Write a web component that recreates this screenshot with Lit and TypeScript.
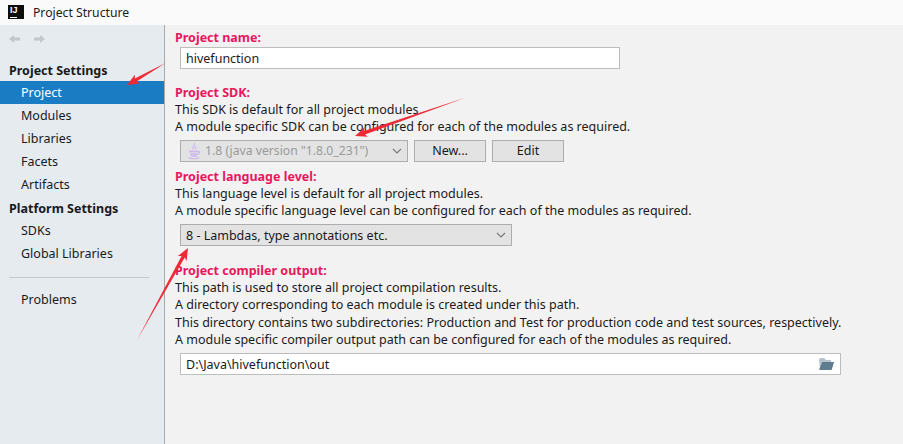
import { LitElement, html, css, svg } from "lit";
import { customElement } from "lit/decorators.js";

const arrows = [
  { from: [165.5, 63], to: [127, 85] },
  { from: [466, 97.5], to: [355, 136] },
  { from: [137, 340], to: [188, 248] },
];

function arrow(a: { from: number[]; to: number[] }) {
  const [x1, y1] = a.from;
  const [x2, y2] = a.to;
  const dx = x2 - x1;
  const dy = y2 - y1;
  const len = Math.hypot(dx, dy);
  const ux = dx / len;
  const uy = dy / len;
  const nx = -uy;
  const ny = ux;
  const p = (along: number, side: number) =>
    `${(x2 - ux * along + nx * side).toFixed(1)},${(y2 - uy * along + ny * side).toFixed(1)}`;
  return svg`<polygon fill="#ee2a37" points="${x1},${y1} ${p(10, 1.8)} ${p(12, 5)} ${x2},${y2} ${p(12, -5)} ${p(10, -1.8)}"></polygon>`;
}

@customElement("app-root")
export class AppRoot extends LitElement {
  static styles = css`
    :host {
      display: block;
      width: 903px;
      height: 444px;
      position: relative;
      overflow: hidden;
      font-family: "Noto Sans", "Open Sans", sans-serif;
      font-size: 12.5px;
      color: #1a1a1a;
      background: #f2f2f2;
    }
    .title {
      height: 25px;
      background: #fafafa;
      display: flex;
      align-items: center;
      padding-left: 8px;
      gap: 9px;
      font-size: 12.2px;
    }
    .logo {
      width: 16px;
      height: 14px;
      background: #0d0d0d;
      color: #fff;
      font: bold 9px/10px "Liberation Sans", sans-serif;
      padding-left: 2px;
      box-sizing: border-box;
      position: relative;
      margin-top: -1px;
    }
    .logo::after {
      content: "";
      position: absolute;
      left: 2px;
      bottom: 1px;
      width: 7px;
      height: 1px;
      background: #fff;
    }
    .body {
      display: flex;
      height: 419px;
    }
    .side {
      width: 164px;
      background: #e6ebf0;
      border-right: 1px solid #a8a8a8;
      box-sizing: content-box;
      flex: none;
    }
    .nav {
      height: 27px;
      display: flex;
      align-items: center;
      gap: 12px;
      padding: 0 0 0 9px;
    }
    .head {
      height: 23px;
      line-height: 25px;
      padding-left: 9px;
      font-weight: 700;
    }
    .item {
      height: 23px;
      line-height: 23px;
      padding-left: 21px;
    }
    .item.sel {
      background: #1a7dc4;
      color: #fff;
    }
    .spacer1 {
      height: 6px;
    }
    .sep {
      height: 1px;
      background: #c9c9c9;
      margin: 12px 15px 10px 9px;
    }
    .main {
      flex: 1;
      padding: 4px 0 0 10px;
    }
    .label {
      color: #e8175d;
      font-weight: 700;
      line-height: 17px;
    }
    .line {
      line-height: 17.3px;
      white-space: nowrap;
    }
    .input {
      height: 22px;
      box-sizing: border-box;
      border: 1px solid #bdbdbd;
      background: #fff;
      display: flex;
      align-items: center;
      padding-left: 5px;
      justify-content: space-between;
    }
    .name {
      width: 440px;
      margin: 1px 0 15px 5px;
    }
    .row {
      display: flex;
      gap: 6px;
      margin: 4px 0 6px 5px;
    }
    .combo {
      height: 22px;
      box-sizing: border-box;
      border: 1px solid #adadad;
      background: #e3e3e3;
      display: flex;
      align-items: center;
      justify-content: space-between;
      padding: 0 5px;
    }
    .combo svg {
      flex: none;
    }
    .sdk {
      width: 228px;
      color: #9a9a9a;
      font-size: 12.2px;
    }
    .sdk span {
      display: flex;
      align-items: center;
      gap: 3px;
    }
    .lang {
      width: 332px;
      margin: 5px 0 16px 5px;
    }
    .btn {
      height: 22px;
      box-sizing: border-box;
      border: 1px solid #adadad;
      background: #e3e3e3;
      display: flex;
      align-items: center;
      justify-content: center;
    }
    .b1 {
      width: 72px;
    }
    .b2 {
      width: 72px;
    }
    .out {
      width: 661px;
      margin: 5px 0 0 5px;
      padding-right: 6px;
    }
    .overlay {
      position: absolute;
      inset: 0;
      pointer-events: none;
    }
  `;

  private chev() {
    return html`<svg width="10" height="6" viewBox="0 0 10 6"><path d="M1 1l4 4 4-4" fill="none" stroke="#777" stroke-width="1.1"></path></svg>`;
  }

  render() {
    return html`
      <div class="title"><div class="logo">IJ</div><div>Project Structure</div></div>
      <div class="body">
        <div class="side">
          <div class="nav">
            <svg width="13" height="10" viewBox="0 0 13 10"><path d="M0 5l5-4v2.500h6v3h-6v2.500z" fill="#c3c7ca"></path></svg>
            <svg width="13" height="10" viewBox="0 0 13 10"><path d="M11 5l-5-4v2.500h-6v3h6v2.500z" fill="#c3c7ca"></path></svg>
          </div>
          <div class="spacer1"></div>
          <div class="head">Project Settings</div>
          <div class="item sel">Project</div>
          <div class="item">Modules</div>
          <div class="item">Libraries</div>
          <div class="item">Facets</div>
          <div class="item">Artifacts</div>
          <div class="head">Platform Settings</div>
          <div class="item">SDKs</div>
          <div class="item">Global Libraries</div>
          <div class="sep"></div>
          <div class="item">Problems</div>
        </div>
        <div class="main">
          <div class="label">Project name:</div>
          <div class="input name">hivefunction</div>
          <div class="label">Project SDK:</div>
          <div class="line">This SDK is default for all project modules</div>
          <div class="line">A module specific SDK can be configured for each of the modules as required.</div>
          <div class="row">
            <div class="combo sdk">
              <span>
                <svg width="16" height="18" viewBox="0 0 16 18"><path d="M8.500 1c1.500 2.500-3 3.500-1.500 6.500M10.500 4c-2 1.500-1.500 2.500-.5 3.500" fill="none" stroke="#d3bff0" stroke-width="1.300"></path><path d="M3 9.500h8.500M4 12h7M11.500 9.500c2.500-.5 2.500 2-.5 3M5 14h6M2.500 15.500c3 1.500 8 1.500 11 0" fill="none" stroke="#cbb5ec" stroke-width="1.300"></path></svg>
                1.8 (java version "1.8.0_231")
              </span>
              ${this.chev()}
            </div>
            <div class="btn b1">New...</div>
            <div class="btn b2">Edit</div>
          </div>
          <div class="label">Project language level:</div>
          <div class="line">This language level is default for all project modules.</div>
          <div class="line">A module specific language level can be configured for each of the modules as required.</div>
          <div class="combo lang"><span>8 - Lambdas, type annotations etc.</span>${this.chev()}</div>
          <div class="label">Project compiler output:</div>
          <div class="line">This path is used to store all project compilation results.</div>
          <div class="line">A directory corresponding to each module is created under this path.</div>
          <div class="line">This directory contains two subdirectories: Production and Test for production code and test sources, respectively.</div>
          <div class="line">A module specific compiler output path can be configured for each of the modules as required.</div>
          <div class="input out">
            <span>D:\\Java\\hivefunction\\out</span>
            <svg width="15" height="12" viewBox="0 0 15 12"><path d="M0 2q0-2 2-2h3l2 2h5v2H3L1 10z" fill="#b5c3cc"></path><path d="M3 4h12l-2 7q0 1-1 1H1q-1 0-.7-1z" fill="#5f7d8f"></path></svg>
          </div>
        </div>
      </div>
      <svg class="overlay" width="903" height="444" viewBox="0 0 903 444">
        ${arrows.map(arrow)}
      </svg>
    `;
  }
}
